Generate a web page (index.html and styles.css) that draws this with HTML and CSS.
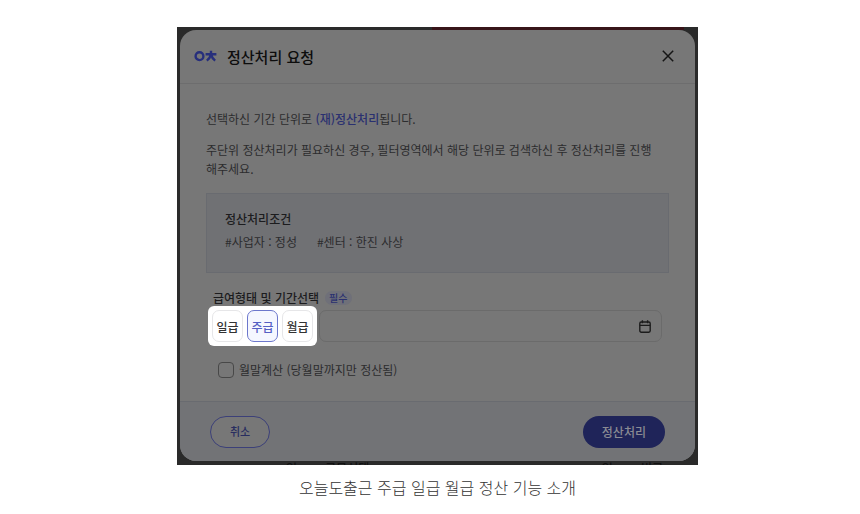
FILE: index.html
```html
<!DOCTYPE html>
<html lang="ko">
    <head>
        <meta charset="utf-8">
        <title>정산처리 요청</title>
        <meta name="viewport" content="width=device-width, initial-scale=1.0">
        <link rel="stylesheet" href="styles.css">
    </head>
    <body>
        <figure class="guide">
            <div class="screen">
                <div class="behind behind-top"><span class="behind-alert"></span></div>
                <section class="modal" role="dialog" aria-labelledby="modalTitle">
                    <header class="modal-header">
                        <svg class="logo" width="23" height="12" viewBox="0 0 23 12" fill="none" stroke="#272f7c" stroke-width="2.4">
                            <circle cx="5.5" cy="6.2" r="3.9"/>
                            <path d="M11.6 4.2h10.8M17 .8v3.4M17 4.2c-.6 2.6-2 4.8-4.2 6.4M17 4.2c.6 2.6 2 4.8 4.2 6.4"/>
                        </svg>
                        <h1 id="modalTitle" class="modal-title">정산처리 요청</h1>
                        <button type="button" class="close" aria-label="닫기">
                            <svg width="12" height="12" viewBox="0 0 12 12" fill="none" stroke="#151515" stroke-width="1.5">
                                <path d="M.8 .8l10.4 10.4M11.2 .8L.8 11.2"/>
                            </svg>
                        </button>
                    </header>

                    <div class="modal-body">
                        <p>선택하신 기간 단위로 <strong>(재)정산처리</strong>됩니다.</p>
                        <p>주단위 정산처리가 필요하신 경우, 필터영역에서 해당 단위로 검색하신 후 정산처리를 진행<br>해주세요.</p>

                        <div class="condition">
                            <h2 class="condition-title">정산처리조건</h2>
                            <div class="condition-tags">
                                <span>#사업자 : 정성</span>
                                <span>#센터 : 한진 사상</span>
                            </div>
                        </div>

                        <div class="field-label">
                            <label for="period">급여형태 및 기간선택</label>
                            <span class="required">필수</span>
                        </div>
                        <div class="field-row">
                            <div class="pay-types">
                                <button type="button" class="pay-type">일급</button>
                                <button type="button" class="pay-type selected">주급</button>
                                <button type="button" class="pay-type">월급</button>
                            </div>
                            <div class="period">
                                <input type="text" id="period" class="period-input">
                                <button type="button" class="calendar" aria-label="달력 열기">
                                    <svg width="12" height="13" viewBox="0 0 12 13" fill="none" stroke="#1c1c1c" stroke-width="1.4">
                                        <rect x=".8" y="2" width="10.4" height="10.2" rx="1.4"/>
                                        <path d="M.8 5.4h10.4M3.4 .2v3M8.6 .2v3"/>
                                    </svg>
                                </button>
                            </div>
                        </div>

                        <div class="month-end">
                            <input type="checkbox" id="monthEnd" class="checkbox">
                            <label for="monthEnd">월말계산 (당월말까지만 정산됨)</label>
                        </div>
                    </div>

                    <footer class="modal-footer">
                        <button type="button" class="btn btn-cancel">취소</button>
                        <button type="button" class="btn btn-submit">정산처리</button>
                    </footer>
                </section>
                <div class="behind behind-bottom">
                    <span>일</span>
                    <span class="behind-wide">근무선택</span>
                    <span>일</span>
                    <span>비고</span>
                </div>
            </div>
            <figcaption class="caption">오늘도출근 주급 일급 월급 정산 기능 소개</figcaption>
        </figure>
    </body>
</html>
```

FILE: styles.css
```css
* {
    box-sizing: border-box;
}
body {
    margin: 0;
    padding: 27px 0 0 15px;
    background: #fff;
    font-family: "Noto Sans CJK KR", "Noto Sans", sans-serif;
}
button,
input {
    font: inherit;
    margin: 0;
}
h1,
h2,
p {
    margin: 0;
}
svg {
    display: block;
}
.guide {
    max-width: 521px;
    margin: 0 auto;
}
.screen {
    padding: 0 3px;
    background: #2a2a2a;
}

/* page left visible around the modal */
.behind {
    display: flex;
    overflow: hidden;
    font-size: 12px;
    font-weight: 500;
    color: #111;
}
.behind-top {
    height: 3px;
    justify-content: flex-end;
    padding-right: 11px;
}
.behind-alert {
    width: 50%;
    background: #381519;
}
.behind-bottom {
    height: 4px;
    padding: 0 32px 0 106px;
    gap: 28px;
    line-height: 14px;
}
.behind-wide {
    flex: 1;
}

.modal {
    border-radius: 16px;
    background: #777;
    color: #2c2c2e;
    font-size: 12px;
    line-height: 19px;
    overflow: hidden;
}
.modal-header {
    display: flex;
    align-items: center;
    gap: 10px;
    height: 54px;
    padding: 0 21px 1px 14px;
    border-bottom: 1px solid #6d6d6e;
}
.modal-title {
    flex: 1;
    font-size: 15px;
    font-weight: 500;
    color: #0d0d0d;
}
.close,
.calendar {
    padding: 0;
    border: 0;
    background: none;
}
.modal-body {
    padding: 25px 26px 22px;
}
.modal-body p {
    margin-bottom: 12px;
    white-space: nowrap;
}
.modal-body strong {
    font-weight: 500;
    color: #2a3070;
}
.condition {
    margin-top: 15px;
    padding: 15px 18px 21px;
    border: 1px solid #696b70;
    background: #707174;
}
.condition-title {
    margin-bottom: 4px;
    font-size: 12px;
    font-weight: 500;
    color: #1c1c1e;
}
.condition-tags {
    display: flex;
    gap: 20px;
}
.field-label {
    display: flex;
    align-items: center;
    gap: 6px;
    margin-top: 16px;
    padding-left: 7px;
    line-height: 17px;
    font-weight: 500;
    color: #1c1c1e;
}
.required {
    padding: 0 4px;
    border-radius: 8px;
    background: #6f7079;
    font-size: 10px;
    line-height: 14px;
    color: #2a3070;
}
.field-row {
    display: flex;
    align-items: center;
    gap: 2px;
    padding: 0 7px 0 2px;
}
.pay-types {
    display: flex;
    gap: 4px;
    padding: 4px;
    border-radius: 6px;
    background: #fff;
}
.pay-type {
    width: 31px;
    height: 32px;
    padding: 0;
    border: 1px solid #e6e6e8;
    border-radius: 7px;
    background: #fff;
    font-weight: 500;
    color: #333;
}
.pay-type.selected {
    border-color: #6c77cc;
    background: #f5f7ff;
    color: #5560c4;
}
.period {
    flex: 1;
    display: flex;
    align-items: center;
    height: 32px;
    padding-right: 10px;
    border: 1px solid #6b6b6b;
    border-radius: 7px;
}
.period-input {
    flex: 1;
    min-width: 0;
    border: 0;
    background: none;
    outline: none;
}
.month-end {
    display: flex;
    align-items: center;
    gap: 5px;
    margin-top: 14px;
    padding-left: 12px;
}
.checkbox {
    appearance: none;
    width: 16px;
    height: 16px;
    border: 1px solid #484848;
    border-radius: 4px;
}
.modal-footer {
    display: flex;
    align-items: center;
    justify-content: space-between;
    height: 60px;
    padding: 0 30px;
    border-top: 1px solid #696b70;
    background: #727376;
}
.btn {
    height: 32px;
    border-radius: 16px;
    font-weight: 500;
}
.btn-cancel {
    padding: 0 19px;
    border: 1px solid #3c4079;
    background: #777;
    font-size: 11px;
    color: #282d60;
}
.btn-submit {
    padding: 0 19px;
    border: 0;
    background: #1f2459;
    color: #8a8b93;
}
.caption {
    padding-top: 10px;
    font-size: 16px;
    font-weight: 300;
    line-height: 24px;
    text-align: center;
    color: #333;
}
```
